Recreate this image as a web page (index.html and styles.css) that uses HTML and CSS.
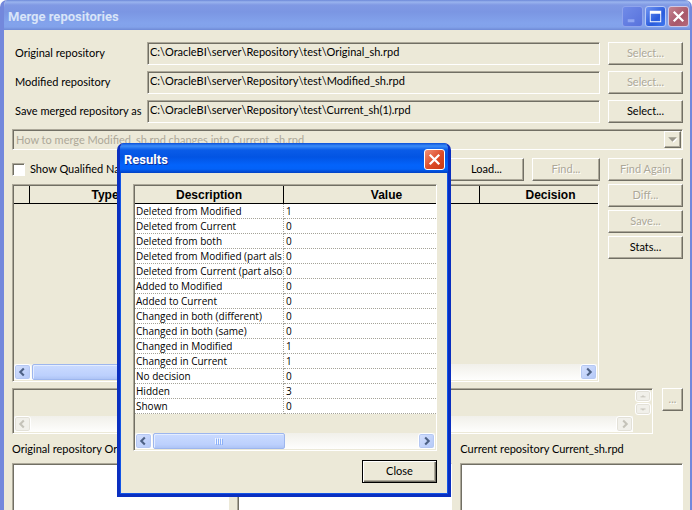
FILE: index.html
```
<!DOCTYPE html>
<html lang="en">
<head>
<meta charset="utf-8">
<title>Merge repositories</title>
<link rel="stylesheet" href="styles.css">
</head>
<body>
<main class="window">
  <header class="titlebar">
    <h1 class="title">Merge repositories</h1>
    <div class="caption-buttons">
      <button class="cap cap-min" type="button" aria-label="Minimize" disabled><svg viewBox="0 0 20 20"><path d="M5 13h7v3H5z" fill="#8fa6f2"/></svg></button>
      <button class="cap cap-max" type="button" aria-label="Maximize"><svg viewBox="0 0 20 20"><path d="M4 4h12v12H4zM5 7v8h10V7z" fill="#fff" fill-rule="evenodd"/></svg></button>
      <button class="cap cap-close" type="button" aria-label="Close window"><svg viewBox="0 0 20 20"><path d="M5 5l10 10M15 5L5 15" stroke="#fff" stroke-width="2.4"/></svg></button>
    </div>
  </header>
  <div class="content">
    <form class="paths">
      <label for="orig">Original repository</label>
      <input class="field" id="orig" type="text" readonly value="C:\OracleBI\server\Repository\test\Original_sh.rpd">
      <button class="btn" type="button" disabled>Select...</button>
      <label for="mod">Modified repository</label>
      <input class="field" id="mod" type="text" readonly value="C:\OracleBI\server\Repository\test\Modified_sh.rpd">
      <button class="btn" type="button" disabled>Select...</button>
      <label for="save">Save merged repository as</label>
      <input class="field" id="save" type="text" readonly value="C:\OracleBI\server\Repository\test\Current_sh(1).rpd">
      <button class="btn" type="button">Select...</button>
    </form>
    <div class="combo">
      <select class="combo-select" aria-label="Merge mode" disabled><option>How to merge Modified_sh.rpd changes into Current_sh.rpd</option></select>
      <span class="combo-arrow"><svg viewBox="0 0 14 14"><path d="M4 6h8l-4 4z" fill="#fff"/><path d="M3 5h8l-4 4z" fill="#9a978a"/></svg></span>
    </div>
    <div class="toolbar">
      <input class="check" type="checkbox" id="qualified">
      <label class="check-label" for="qualified">Show Qualified Name</label>
      <button class="btn" type="button">Load...</button>
      <button class="btn btn-find" type="button" disabled>Find...</button>
      <button class="btn" type="button" disabled>Find Again</button>
    </div>
    <div class="decisions">
      <div class="grid-box">
        <table class="grid">
          <colgroup><col class="c-mark"><col class="c-type"><col class="c-desc"><col class="c-decision"></colgroup>
          <thead><tr><th></th><th>Type</th><th>Description</th><th>Decision</th></tr></thead>
        </table>
        <div class="scroll">
          <button class="arrow" type="button" aria-label="Scroll left"><svg viewBox="0 0 16 16"><path d="M9.500 4L5.500 8l4 4" fill="none" stroke="#4d6185" stroke-width="2.4"/></svg></button>
          <span class="thumb thumb-main"></span>
          <button class="arrow end" type="button" aria-label="Scroll right"><svg viewBox="0 0 16 16"><path d="M6.500 4l4 4-4 4" fill="none" stroke="#4d6185" stroke-width="2.400"/></svg></button>
        </div>
      </div>
      <div class="side">
        <button class="btn" type="button" disabled>Diff...</button>
        <button class="btn" type="button" disabled>Save...</button>
        <button class="btn" type="button">Stats...</button>
      </div>
    </div>
    <div class="detail">
      <div class="detail-box">
        <div class="spin">
          <button class="arrow off" type="button" aria-label="Scroll up" disabled><svg viewBox="0 0 16 12"><path d="M5 7h6M7 6h2" stroke="#bdbbb0" stroke-width="1"/></svg></button>
          <button class="arrow off" type="button" aria-label="Scroll down" disabled><svg viewBox="0 0 16 12"><path d="M5 6h6M7 7h2" stroke="#bdbbb0" stroke-width="1"/></svg></button>
        </div>
        <div class="scroll">
          <button class="arrow off" type="button" aria-label="Scroll left" disabled><svg viewBox="0 0 16 16"><path d="M9.500 4L5.500 8l4 4" fill="none" stroke="#c5c3b9" stroke-width="2.4"/></svg></button>
          <button class="arrow off end" type="button" aria-label="Scroll right" disabled><svg viewBox="0 0 16 16"><path d="M6.500 4l4 4-4 4" fill="none" stroke="#c5c3b9" stroke-width="2.4"/></svg></button>
        </div>
      </div>
      <button class="btn btn-more" type="button" disabled>...</button>
    </div>
    <div class="panes">
      <section class="pane"><h2>Original repository Original_sh.rpd</h2><div class="list"></div></section>
      <section class="pane"><h2>Modified repository Modified_sh.rpd</h2><div class="list"></div></section>
      <section class="pane"><h2>Current repository Current_sh.rpd</h2><div class="list"></div></section>
    </div>
  </div>

  <section class="dialog" role="dialog" aria-labelledby="results-title">
    <header class="dialog-bar">
      <h2 class="title" id="results-title">Results</h2>
      <button class="cap cap-close" type="button" aria-label="Close results"><svg viewBox="0 0 20 20"><path d="M5 5l10 10M15 5L5 15" stroke="#fff" stroke-width="2.4"/></svg></button>
    </header>
    <div class="dialog-body">
      <div class="grid-box results">
        <table class="grid">
          <colgroup><col class="c-name"><col class="c-value"></colgroup>
          <thead><tr><th>Description</th><th>Value</th></tr></thead>
          <tbody>
            <tr><td>Deleted from Modified</td><td>1</td></tr>
            <tr><td>Deleted from Current</td><td>0</td></tr>
            <tr><td>Deleted from both</td><td>0</td></tr>
            <tr><td>Deleted from Modified (part als</td><td>0</td></tr>
            <tr><td>Deleted from Current (part also</td><td>0</td></tr>
            <tr><td>Added to Modified</td><td>0</td></tr>
            <tr><td>Added to Current</td><td>0</td></tr>
            <tr><td>Changed in both (different)</td><td>0</td></tr>
            <tr><td>Changed in both (same)</td><td>0</td></tr>
            <tr><td>Changed in Modified</td><td>1</td></tr>
            <tr><td>Changed in Current</td><td>1</td></tr>
            <tr><td>No decision</td><td>0</td></tr>
            <tr><td>Hidden</td><td>3</td></tr>
            <tr><td>Shown</td><td>0</td></tr>
          </tbody>
        </table>
        <div class="scroll">
          <button class="arrow" type="button" aria-label="Scroll left"><svg viewBox="0 0 16 16"><path d="M9.500 4L5.500 8l4 4" fill="none" stroke="#4d6185" stroke-width="2.4"/></svg></button>
          <span class="thumb thumb-results"><svg class="grip" viewBox="0 0 8 7"><path d="M.5 0v6M2.500 0v6M4.500 0v6M6.500 0v6" stroke="#eef4fe"/><path d="M1.500 1v6M3.500 1v6M5.500 1v6M7.500 1v6" stroke="#8cb0f8"/></svg></span>
          <button class="arrow end" type="button" aria-label="Scroll right"><svg viewBox="0 0 16 16"><path d="M6.500 4l4 4-4 4" fill="none" stroke="#4d6185" stroke-width="2.4"/></svg></button>
        </div>
      </div>
      <button class="btn btn-default" type="button">Close</button>
    </div>
  </section>
</main>
</body>
</html>
```
FILE: styles.css
```
* { box-sizing: border-box; }

body {
  margin: 0;
  overflow: hidden;
  background: #fff;
  color: #000;
  font: 11px/14px Lato, "Liberation Sans", Arial, sans-serif;
}

button, input, select { margin: 0; font: inherit; color: inherit; }
h1, h2 { margin: 0; font: inherit; }
svg { display: block; width: 100%; height: 100%; }

.window {
  position: relative;
  display: flex;
  flex-direction: column;
  height: 100vh;
  border: solid #7388dc;
  border-width: 0 2px 0 4px;
  border-radius: 7px 7px 0 0;
  background: #ece9d8;
  overflow: hidden;
}

.titlebar, .dialog-bar {
  display: flex;
  flex: none;
  align-items: center;
  justify-content: space-between;
  height: 30px;
  padding: 3px 0 0 4px;
}

.titlebar {
  margin: 0 -2px 0 -4px;
  padding: 3px 3px 0 8px;
  background: linear-gradient(#6c88d8 0, #9ab4ee 2px, #8099e4 5px, #7b96e3 12px, #83a3ec 23px, #82a2ea 27px, #6f8ad6 30px);
}

.title { font: bold 13px/18px Roboto, "Open Sans", sans-serif; }
.titlebar .title { color: #d8e4f8; }

.caption-buttons { display: flex; gap: 2px; }

.cap {
  width: 21px;
  height: 21px;
  padding: 0;
  border: 1px solid #b7c8f5;
  border-radius: 3px;
}
.cap-min { border-color: #8fa4ec; background: linear-gradient(135deg, #708be8, #5872dc); }
.cap-max { background: linear-gradient(135deg, #6f94f2, #2a5bdc 60%, #3f78f0); }
.cap-close { border-color: #cfc8e4; background: linear-gradient(135deg, #c38390, #a9586a 60%, #b4697a); }

.content {
  display: flex;
  flex: 1;
  flex-direction: column;
  padding: 12px 7px 0 8px;
}

.paths {
  display: grid;
  grid-template-columns: 124px 1fr 75px;
  gap: 6px 8px;
  align-items: center;
  padding-left: 3px;
}
.paths label { padding-bottom: 2px; white-space: nowrap; }

.field, .grid-box, .detail-box, .list, .combo {
  border: 1px solid;
  border-color: #aca899 #fff #fff #aca899;
  box-shadow: inset 1px 1px #716f64;
  padding: 1px;
}

.field {
  width: 100%;
  height: 23px;
  padding: 0 2px 4px;
  background: #ece9d8;
  outline: 0;
}

.btn {
  width: 75px;
  height: 23px;
  padding: 0 0 2px;
  border: 1px solid;
  border-color: #fff #716f64 #716f64 #fff;
  background: #ece9d8;
  box-shadow: inset -1px -1px #aca899;
  white-space: nowrap;
}
.btn:disabled { color: #aca899; text-shadow: 1px 1px #fff; }

.combo {
  position: relative;
  height: 21px;
  margin-top: 6px;
}
.combo-select {
  display: block;
  width: 100%;
  height: 17px;
  padding: 0 20px 0 2px;
  border: 0;
  background: none;
  color: #aca899;
  opacity: 1;
  appearance: none;
}
.combo-arrow {
  position: absolute;
  top: 1px;
  right: 1px;
  width: 17px;
  height: 17px;
  border: 1px solid;
  border-color: #fff #716f64 #716f64 #fff;
  background: #ece9d8;
  box-shadow: inset -1px -1px #aca899;
}

.toolbar {
  display: flex;
  align-items: center;
  gap: 8px;
  margin-top: 8px;
}
.check {
  width: 13px;
  height: 13px;
  border: 1px solid;
  border-color: #aca899 #fff #fff #aca899;
  background: #fff;
  box-shadow: inset 1px 1px #716f64;
  appearance: none;
}
.check-label { flex: 1; margin-left: -3px; padding-bottom: 2px; }
.btn-find { width: 68px; }

.decisions {
  display: flex;
  gap: 9px;
  height: 198px;
  margin-top: 3px;
}
.side { display: flex; flex-direction: column; gap: 3px; }

.grid-box {
  display: flex;
  flex: 1;
  flex-direction: column;
  min-width: 0;
  overflow: hidden;
}

.grid { border-collapse: separate; border-spacing: 0; table-layout: fixed; }
.decisions .grid { width: 608px; }
.grid th {
  height: 18px;
  padding: 1px 0 0;
  border-right: 1px solid #000;
  border-bottom: 1px solid #000;
  font: bold 12px/16px "Liberation Sans", Arial, sans-serif;
}
.c-mark { width: 16px; }
.c-type { width: 151px; }
.c-desc { width: 299px; }

.scroll {
  display: flex;
  gap: 1px;
  height: 16px;
  margin-top: auto;
  background: linear-gradient(#f1f0ea, #fefefd);
}
.arrow {
  flex: none;
  width: 17px;
  height: 16px;
  padding: 0;
  border: 1px solid #fff;
  border-radius: 3px;
  background: linear-gradient(135deg, #d6e1fd, #b3c8f8);
  box-shadow: inset 0 0 0 1px #b5c8f3;
}
.arrow.end { margin-left: auto; }
.arrow.off { background: #f1f0ea; box-shadow: inset 0 0 0 1px #e3e1d8; }
.thumb {
  display: flex;
  align-items: center;
  justify-content: center;
  border: 1px solid #9db6ee;
  border-radius: 2px;
  background: linear-gradient(#cbdbff, #bcd0fd 75%, #aec4f5);
  box-shadow: inset 1px 1px #e4edff;
}
.thumb-main { width: 220px; }
.thumb-results { width: 132px; }
.grip { width: 8px; height: 7px; }

.detail {
  display: flex;
  align-items: flex-start;
  gap: 9px;
  margin-top: 6px;
}
.detail-box {
  display: flex;
  flex: 1;
  flex-direction: column;
  height: 46px;
}
.detail-box .scroll { margin-right: 18px; }
.spin {
  display: flex;
  flex-direction: column;
  align-self: flex-end;
  gap: 1px;
}
.spin .arrow { width: 16px; height: 12px; }
.btn-more { width: 21px; }

.panes {
  display: grid;
  flex: 1;
  grid-template-columns: 216fr 215fr 222fr;
  gap: 8px;
  margin-top: 8px;
}
.pane { display: flex; flex-direction: column; min-width: 0; }
.pane h2 { overflow: hidden; white-space: nowrap; }
.list {
  flex: 1;
  margin-top: 7px;
  border-bottom: 0;
  background: #fff;
}

.dialog {
  position: absolute;
  top: 143px;
  left: 113px;
  width: 334px;
  border: solid #0a2fc0;
  border-width: 0 3px 3px;
  border-radius: 7px 7px 0 0;
  background: #ece9d8;
  box-shadow: inset 0 0 0 1px #1254e6;
  overflow: hidden;
}
.dialog-bar {
  margin: 0 -3px;
  padding: 3px 6px 0 7px;
  background: linear-gradient(#0a4fd8 0, #3b8cf8 3px, #0a5ce8 7px, #0254e3 14px, #0363fb 22px, #0362f8 26px, #0241c4 30px);
}
.dialog-bar .title { color: #fff; text-shadow: 1px 1px #0f2f96; }
.dialog-bar .cap-close { border-color: #fff; background: linear-gradient(135deg, #f09078, #dd4a26 55%, #c93a14); }

.dialog-body {
  display: flex;
  flex-direction: column;
  align-items: flex-end;
  gap: 9px;
  padding: 11px 11px 11px 13px;
}
.results { flex: none; width: 100%; height: 267px; }
.results .grid { width: 355px; }
.c-name { width: 149px; }
.grid td {
  height: 15px;
  padding: 0 0 0 2px;
  border-right: 1px dotted #a5a398;
  border-bottom: 1px dotted #a5a398;
  background: #fff;
  font: 10px/14px "Open Sans", "Liberation Sans", sans-serif;
  white-space: nowrap;
}
.grid td:first-child { padding-left: 1px; }
.btn-default {
  border-color: #000;
  box-shadow: inset 1px 1px #fff, inset -1px -1px #716f64, inset -2px -2px #aca899;
}
```
